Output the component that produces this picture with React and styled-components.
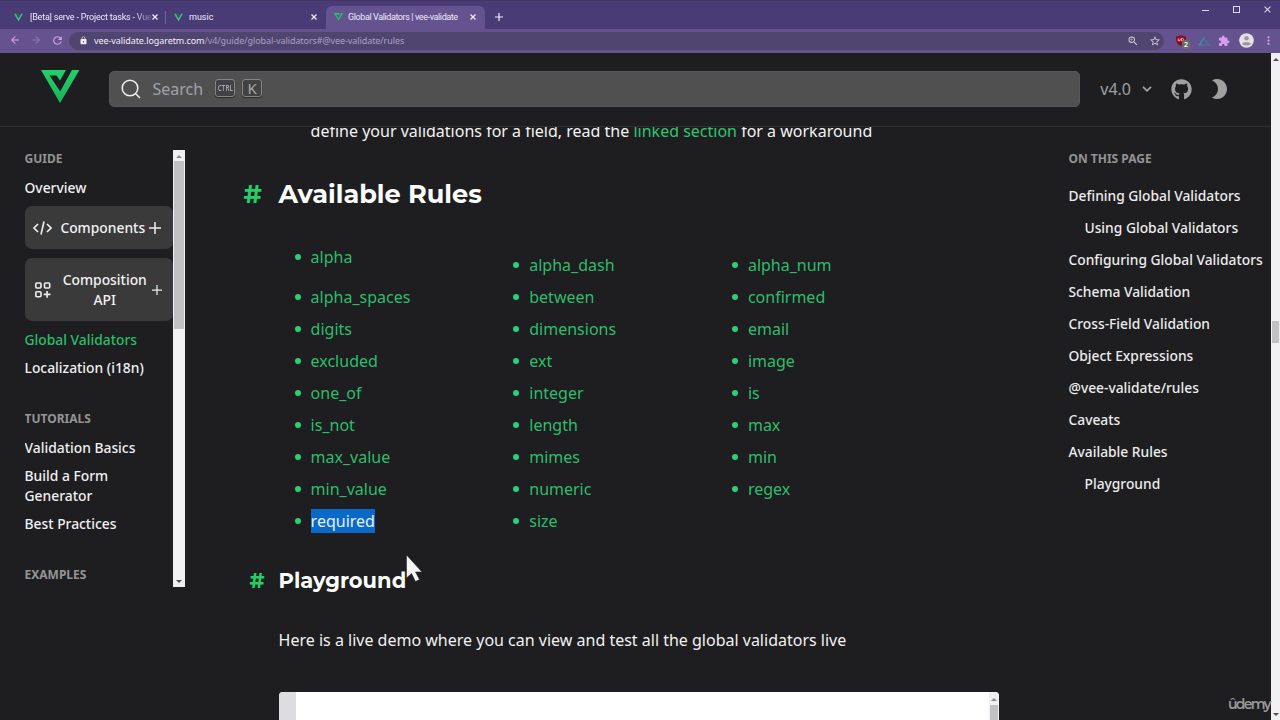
import React from 'react';
import styled, { createGlobalStyle } from 'styled-components';
import { FaGithub } from 'react-icons/fa';
import { MdLock, MdExtension, MdStarBorder, MdZoomIn, MdArrowBack, MdArrowForward, MdRefresh, MdMoreVert } from 'react-icons/md';

const Global = createGlobalStyle`
  * { box-sizing: border-box; }
  body { margin: 0; background: #1e1e20; font-family: "Noto Sans", sans-serif; overflow: hidden; }
  svg { display: block; flex: none; }
`;

const Window = styled.div`
  position: relative;
  width: 1280px;
  height: 720px;
  overflow: hidden;
  display: flex;
  flex-direction: column;
  background: #1e1e20;
  color: #f2f2f2;
`;

/* Browser chrome */
const TabStrip = styled.div`
  height: 29px;
  flex: none;
  display: flex;
  align-items: flex-end;
  background: #483b76;
  border-top: 1px solid #45365f;
  padding-left: 5px;
`;
const Tab = styled.div`
  width: ${p => p.$w}px;
  height: 23px;
  display: flex;
  align-items: center;
  padding: 0 ${p => p.$pr || 9}px 1px ${p => p.$pad || 9}px;
  background: ${p => (p.$active ? '#64538f' : 'transparent')};
  border-radius: 6px 6px 0 0;
  color: #eeeaf8;
  font-family: Roboto, sans-serif;
  font-size: 9px;
`;
const TabTitle = styled.span`
  flex: 1;
  margin-left: ${p => p.$gap || 6}px;
  letter-spacing: ${p => p.$ls || 0}px;
  white-space: nowrap;
  ${p => p.$fade && 'mask-image: linear-gradient(90deg, #000 85%, transparent 103%);'}
`;
const TabDivider = styled.i`
  width: 1px;
  height: 13px;
  margin-bottom: 5px;
  background: #75689c;
`;
const NewTab = styled.div`
  height: 22px;
  display: flex;
  align-items: center;
  margin: 0 0 1px 10px;
`;
const WindowButtons = styled.div`
  margin-left: auto;
  align-self: flex-start;
  display: flex;
  gap: 23px;
  padding: 5px 9px 0 0;
`;
const Toolbar = styled.div`
  height: 24px;
  flex: none;
  display: flex;
  align-items: center;
  background: #64538f;
  padding: 0 5px 1px 9px;
  color: #d8a0ee;
`;
const NavButtons = styled.div`
  display: flex;
  gap: 9px;
  width: 64px;
`;
const UrlBar = styled.div`
  width: 1095px;
  height: 18px;
  flex: none;
  border-radius: 9px;
  background: #50456f;
  display: flex;
  align-items: center;
  padding: 0 3px 0 7px;
  font-size: 9px;
  color: #f2eefa;
`;
const LockSlot = styled.span`
  width: 18px;
  padding-left: 3px;
`;
const Url = styled.span`
  flex: 1;
  letter-spacing: -0.08px;
`;
const UrlPath = styled.span`
  color: #aaa0c4;
`;
const UrlIcons = styled.div`
  display: flex;
  gap: 10px;
  color: #d2cbe2;
`;
const Extensions = styled.div`
  display: flex;
  align-items: center;
  margin-left: 12px;
  gap: 8.5px;
`;
const Shield = styled.div`
  position: relative;
  width: 13px;
  height: 14px;
  padding-top: 1px;
`;
const Count = styled.span`
  position: absolute;
  left: 6px;
  top: 6px;
  width: 8px;
  height: 9px;
  border-radius: 2px;
  background: #6b6b6b;
  color: #fff;
  font-size: 7px;
  font-weight: 600;
  line-height: 9px;
  text-align: center;
`;

/* Page */
const Viewport = styled.div`
  flex: 1;
  display: flex;
  min-height: 0;
`;
const Page = styled.div`
  width: 1271px;
  display: flex;
  flex-direction: column;
`;
const Header = styled.header`
  height: 74px;
  flex: none;
  display: flex;
  align-items: center;
  padding: 0 44px 1px 41px;
  border-bottom: 1px solid #2f2f31;
`;
const Logo = styled.div`
  padding-bottom: 6px;
`;
const Search = styled.div`
  width: 972px;
  height: 36px;
  margin-left: 30px;
  border-radius: 5px;
  background: #505050;
  border: 1px solid #575757;
  display: flex;
  align-items: center;
  padding-left: 11px;
  color: #a0a3ab;
  font-size: 16px;
`;
const SearchLabel = styled.span`
  margin: 0 12px 0 11.500px;
`;
const Key = styled.kbd`
  width: 20px;
  height: 18px;
  margin: -3px 7px 0 0;
  border: 1px solid #858585;
  border-radius: 3px;
  background: #424242;
  box-shadow: 0 1px 1px #2a2a2a;
  display: flex;
  align-items: center;
  justify-content: center;
  font: ${p => (p.$small ? '600 9.500px' : '400 15px')} "Noto Sans", sans-serif;
  color: #a5a8af;
`;
const KeyText = styled.span`
  transform: scaleX(${p => p.$scale || 1});
`;
const HeaderTools = styled.div`
  margin-left: 20px;
  display: flex;
  align-items: center;
  color: #a0a0a0;
  font-size: 16px;
`;
const Body = styled.div`
  flex: 1;
  min-height: 0;
  display: flex;
`;
const Sidebar = styled.nav`
  width: 160.500px;
  height: 437px;
  margin: 23px 0 0 24.500px;
  display: flex;
  font-size: 13.85px;
  font-weight: 500;
  line-height: 20px;
`;
const SideContent = styled.div`
  width: 148.500px;
  overflow: hidden;
`;
const SideTitle = styled.div`
  height: 16px;
  margin-bottom: 12px;
  padding-top: 1px;
  color: #949494;
  font-size: 12px;
  font-weight: 700;
  line-height: 16px;
`;
const SideLink = styled.div`
  margin-bottom: 8px;
  padding-right: ${p => (p.$wrap ? 40 : 0)}px;
  white-space: ${p => (p.$wrap ? 'normal' : 'nowrap')};
  color: ${p => (p.$active ? '#27bf69' : '#f0f0f0')};
`;
const SideGroup = styled.div`
  height: ${p => p.$h}px;
  margin-bottom: 9px;
  padding: 0 ${p => p.$pr}px 0 8px;
  border-radius: 7px;
  background: #3a3a3b;
  display: flex;
  align-items: center;
  text-align: center;
`;
const SideGroupLabel = styled.span`
  flex: 1;
  padding: 0 ${p => p.$pr}px 0 ${p => p.$pl}px;
  text-align: center;
`;
const Spacer = styled.div`
  height: ${p => p.$h}px;
`;
const ScrollTrack = styled.div`
  width: ${p => p.$w}px;
  flex: none;
  background: #f0eff1;
  display: flex;
  flex-direction: column;
  align-items: center;
`;
const ScrollThumb = styled.div`
  width: 100%;
  height: ${p => p.$h}px;
  margin-top: ${p => p.$mt}px;
  border: solid #f0eff1;
  border-width: 0 1px;
  background: #c1c0c2;
`;
const Arrow = styled.i`
  border: 3px solid transparent;
  border-top: ${p => (p.$down ? '3px solid #505050' : '0')};
  border-bottom: ${p => (p.$down ? '0' : `3px solid ${p.$c || '#505050'}`)};
  margin-top: ${p => p.$mt || 'auto'};
  margin-bottom: ${p => p.$mb || 0}px;
`;
const Article = styled.main`
  width: 720px;
  margin-left: 93.600px;
  height: 593px;
  font-size: 16px;
  line-height: 24px;
`;
const Clip = styled.div`
  height: 30px;
  padding-left: 32px;
  overflow: hidden;
`;
const ClippedLine = styled.p`
  margin: -8px 0 0;
  white-space: nowrap;
`;
const Green = styled.span`
  color: #2dc56f;
`;
const Heading = styled.h2`
  display: flex;
  align-items: center;
  height: ${p => p.$h}px;
  margin: 0 0 0 ${p => p.$ml}px;
  color: #fff;
  font-family: Montserrat, "Noto Sans", sans-serif;
  font-size: ${p => p.$size}px;
  font-weight: 700;
  white-space: nowrap;
`;
const Hash = styled.span`
  width: ${p => p.$w}px;
  color: #22d068;
`;
const RuleList = styled.ul`
  list-style: none;
  margin: 31px 0 0;
  padding: 0 32px;
  display: grid;
  grid-template-columns: repeat(3, 1fr);
`;
const Rule = styled.li`
  display: flex;
  align-items: center;
  height: 24px;
  margin: 8px 0 0 -16px;
  color: #2dbd6c;
  &:first-child { margin-top: 0; }
  &::before {
    content: "";
    width: 6px;
    height: 6px;
    margin-right: 10px;
    border-radius: 50%;
    background: #2bd07a;
  }
`;
const RuleName = styled.span`
  background: ${p => (p.$selected ? '#0a68c8' : 'transparent')};
  color: ${p => (p.$selected ? '#e6f2ff' : 'inherit')};
`;
const Paragraph = styled.p`
  margin: 31px 0 40px;
`;
const Editor = styled.div`
  height: 40px;
  display: flex;
  background: #fff;
  border-radius: 4px;
  overflow: hidden;
`;
const Gutter = styled.div`
  width: 17px;
  margin-right: auto;
  background: #dddcdf;
`;
const Toc = styled.aside`
  margin: 23px 0 0 69.900px;
  font-size: 13.8px;
  font-weight: 500;
  line-height: 20px;
  white-space: nowrap;
`;
const TocLink = styled.div`
  margin: 0 0 12px ${p => (p.$nested ? 16 : 0)}px;
  color: #ececec;
`;
const Cursor = styled.svg`
  position: absolute;
  left: 404px;
  top: 551px;
`;
const Watermark = styled.div`
  position: absolute;
  left: 1228px;
  top: 694px;
  color: #98989a;
  font: 600 14px/20px Montserrat, "Noto Sans", sans-serif;
  letter-spacing: -1.7px;
`;

const VueMark = () => (
  <svg width="9" height="9" viewBox="0 0 9 9">
    <path d="M0 .7h2l2.5 4.6L7 .7h2L4.5 8.5z" fill="#42b883" />
    <path d="M2 .7h1.5l1 1.8 1-1.8H7L4.500 5.300z" fill="#35604f" />
  </svg>
);
const VeeMark = ({ width, height }) => (
  <svg width={width} height={height} viewBox="0 0 38 33">
    <defs>
      <linearGradient id="vee" x1="0" y1="0" x2="0" y2="1">
        <stop offset="0" stopColor="#22d06c" />
        <stop offset="1" stopColor="#18b45c" />
      </linearGradient>
    </defs>
    <path fill="url(#vee)" d="M0 0h25l-6 10.500-3.500-5H8.500L19.200 21.500 31 0h7.500L19 33z" />
  </svg>
);
const Cross = ({ size = 6, color = '#eeeaf8', w = 1.3 }) => (
  <svg width={size} height={size} viewBox="0 0 6 6" fill="none" stroke={color} strokeWidth={w}>
    <path d="M.5.5l5 5M5.500.5l-5 5" />
  </svg>
);
const Plus = ({ size = 12, color = '#eee', w = 1.5 }) => (
  <svg width={size} height={size} viewBox="0 0 12 12" fill="none" stroke={color} strokeWidth={w}>
    <path d="M6 0v12M0 6h12" />
  </svg>
);

const rules = [
  'alpha', 'alpha_dash', 'alpha_num', 'alpha_spaces', 'between', 'confirmed',
  'digits', 'dimensions', 'email', 'excluded', 'ext', 'image', 'one_of', 'integer', 'is',
  'is_not', 'length', 'max', 'max_value', 'mimes', 'min', 'min_value', 'numeric', 'regex',
  'required', 'size',
];
const toc = [
  ['Defining Global Validators'], ['Using Global Validators', true], ['Configuring Global Validators'],
  ['Schema Validation'], ['Cross-Field Validation'], ['Object Expressions'], ['@vee-validate/rules'],
  ['Caveats'], ['Available Rules'], ['Playground', true],
];

export default function App() {
  return (
    <Window>
      <Global />
      <TabStrip>
        <Tab $w={160} $pr={7}>
          <VueMark />
          <TabTitle $fade $gap={7} $ls={-0.2}>[Beta] serve - Project tasks - Vue</TabTitle>
          <Cross />
        </Tab>
        <TabDivider />
        <Tab $w={160} $pad={8}>
          <VueMark />
          <TabTitle>music</TabTitle>
          <Cross />
        </Tab>
        <Tab $w={159} $active $pad={8}>
          <VeeMark width={9} height={8} />
          <TabTitle $gap={5} $ls={-0.4}>Global Validators | vee-validate</TabTitle>
          <Cross />
        </Tab>
        <NewTab><Plus size={8} color="#f0ecfa" w={1.8} /></NewTab>
        <WindowButtons>
          <svg width="8" height="8" fill="none" stroke="#ddd8ec"><path d="M0 4.500h7" /></svg>
          <svg width="8" height="8" fill="none" stroke="#ddd8ec"><rect x=".5" y=".5" width="6" height="6" /></svg>
          <Cross size={7} color="#ddd8ec" w={0.9} />
        </WindowButtons>
      </TabStrip>
      <Toolbar>
        <NavButtons>
          <MdArrowBack size={12} />
          <MdArrowForward size={12} color="#9277b8" />
          <MdRefresh size={13} />
        </NavButtons>
        <UrlBar>
          <LockSlot><MdLock size={9} /></LockSlot>
          <Url>vee-validate.logaretm.com<UrlPath>/v4/guide/global-validators#@vee-validate/rules</UrlPath></Url>
          <UrlIcons>
            <MdZoomIn size={12} />
            <MdStarBorder size={12} />
          </UrlIcons>
        </UrlBar>
        <Extensions>
          <Shield>
            <svg width="10" height="11" viewBox="0 0 10 11">
              <path d="M5 0c1.500 1 3 1.400 5 1.400 0 5-.8 7.400-5 9.600C.8 8.800 0 6.400 0 1.400 2 1.400 3.500 1 5 0z" fill="#8c0a22" />
              <path d="M2.300 3.500v2.200h1.800V3.500M5.500 3.300v2.500h1c1.500 0 1.500-2.400 0-2.400z" fill="none" stroke="#f0d8e0" strokeWidth=".8" />
            </svg>
            <Count>2</Count>
          </Shield>
          <svg width="12" height="10" viewBox="0 0 12 10" fill="none" strokeWidth="1.100">
            <path d="M6.500 1L1.200 9h3" stroke="#3a9aa0" />
            <path d="M5 1.500L10.500 9H3.500" stroke="#3b7f9c" />
          </svg>
          <MdExtension size={12} color="#d59cf0" />
          <svg width="15" height="15" viewBox="0 0 15 15">
            <circle cx="7.500" cy="7.500" r="7.300" fill="#e4e2e6" />
            <circle cx="7.500" cy="5.300" r="2.300" fill="#9b9a9e" />
            <path d="M3 11c.4-2.800 8.600-2.800 9 0-1.500 2-7.500 2-9 0z" fill="#9b9a9e" />
          </svg>
          <MdMoreVert size={13} />
        </Extensions>
      </Toolbar>
      <Viewport>
        <Page>
          <Header>
            <Logo><VeeMark width={38} height={33} /></Logo>
            <Search>
              <svg width="20" height="20" viewBox="0 0 20 20" fill="none" stroke="#f2f2f2" strokeWidth="1.500">
                <circle cx="9" cy="9" r="7.800" /><path d="M14.500 14.500l4.500 4.500" />
              </svg>
              <SearchLabel>Search</SearchLabel>
              <Key $small><KeyText $scale={0.66}>CTRL</KeyText></Key>
              <Key><KeyText>K</KeyText></Key>
            </Search>
            <HeaderTools>
              <span>v4.0</span>
              <svg width="10" height="6" viewBox="0 0 10 6" fill="none" stroke="#a6a6a6" strokeWidth="1.700" style={{ marginLeft: 11 }}>
                <path d="M1 .8l4 4 4-4" />
              </svg>
              <FaGithub size={21} style={{ marginLeft: 19 }} />
              <svg width="15" height="20" viewBox="0 0 15 20" style={{ marginLeft: 20 }}>
                <path d="M0 1.200C8 5 8 15 0 18.800 8 22.500 15 17 15 10S8-2.500 0 1.200z" fill="#a0a0a0" />
              </svg>
            </HeaderTools>
          </Header>
          <Body>
            <Sidebar>
              <SideContent>
                <SideTitle>GUIDE</SideTitle>
                <SideLink>Overview</SideLink>
                <SideGroup $h={43} $pr={12}>
                  <svg width="19" height="14" viewBox="0 0 19 14" fill="none" stroke="#eee" strokeWidth="1.600">
                    <path d="M5 3L1 7l4 4M14 3l4 4-4 4M11 .5L8 13.500" />
                  </svg>
                  <SideGroupLabel $pl={6} $pr={1}>Components</SideGroupLabel>
                  <Plus />
                </SideGroup>
                <SideGroup $h={63} $pr={11}>
                  <svg width="17" height="16" viewBox="0 0 17 16" fill="none" stroke="#eee" strokeWidth="1.600" style={{ marginLeft: 2 }}>
                    <rect x=".8" y="1" width="5.200" height="5" rx="1" />
                    <rect x="9.500" y="1" width="5.200" height="5" rx="1" />
                    <rect x=".8" y="9.800" width="5.200" height="5" rx="1" />
                    <path d="M12.100 9v6.800M8.700 12.400h6.800" />
                  </svg>
                  <SideGroupLabel $pl={6} $pr={0}>Composition<br />API</SideGroupLabel>
                  <Plus size={10} />
                </SideGroup>
                <SideLink $active>Global Validators</SideLink>
                <SideLink>Localization (i18n)</SideLink>
                <Spacer $h={24} />
                <SideTitle>TUTORIALS</SideTitle>
                <SideLink>Validation Basics</SideLink>
                <SideLink $wrap>Build a Form Generator</SideLink>
                <SideLink>Best Practices</SideLink>
                <Spacer $h={24} />
                <SideTitle>EXAMPLES</SideTitle>
              </SideContent>
              <ScrollTrack $w={12}>
                <Arrow $mt="5px" $c="#8a8a8a" />
                <ScrollThumb $h={168} $mt={3} />
                <Arrow $down $mb={4} />
              </ScrollTrack>
            </Sidebar>
            <Article>
              <Clip>
                <ClippedLine>define your validations for a field, read the <Green>linked section</Green> for a workaround</ClippedLine>
              </Clip>
              <Spacer $h={17} />
              <Heading $h={40} $ml={-35} $size={25.6}>
                <Hash $w={35}>#</Hash>
                <span>Available Rules</span>
              </Heading>
              <RuleList>
                {rules.map(name => (
                  <Rule key={name}><RuleName $selected={name === 'required'}>{name}</RuleName></Rule>
                ))}
              </RuleList>
              <Spacer $h={32} />
              <Heading $h={32} $ml={-29} $size={21}>
                <Hash $w={29}>#</Hash>
                <span>Playground</span>
              </Heading>
              <Paragraph>Here is a live demo where you can view and test all the global validators live</Paragraph>
              <Editor>
                <Gutter />
                <ScrollTrack $w={10}>
                  <Arrow $mt="6px" $c="#8a8a8a" />
                  <ScrollThumb $h={40} $mt={4} />
                </ScrollTrack>
              </Editor>
            </Article>
            <Toc>
              <SideTitle>ON THIS PAGE</SideTitle>
              <Spacer $h={8} />
              {toc.map(([label, nested]) => <TocLink key={label} $nested={nested}>{label}</TocLink>)}
            </Toc>
          </Body>
        </Page>
        <ScrollTrack $w={9}>
          <Arrow $mt="5px" />
          <ScrollThumb $h={22} $mt={260} />
          <Arrow $down $mb={4} />
        </ScrollTrack>
      </Viewport>
      <Cursor width="20" height="32" viewBox="0 0 20 32">
        <path d="M2.500 4v23l5-4.500 4 8 4-2-4-7.500h6.500z" fill="#f6f6f6" stroke="#2a2a2a" strokeWidth=".6" />
      </Cursor>
      <Watermark>ûdemy</Watermark>
    </Window>
  );
}
